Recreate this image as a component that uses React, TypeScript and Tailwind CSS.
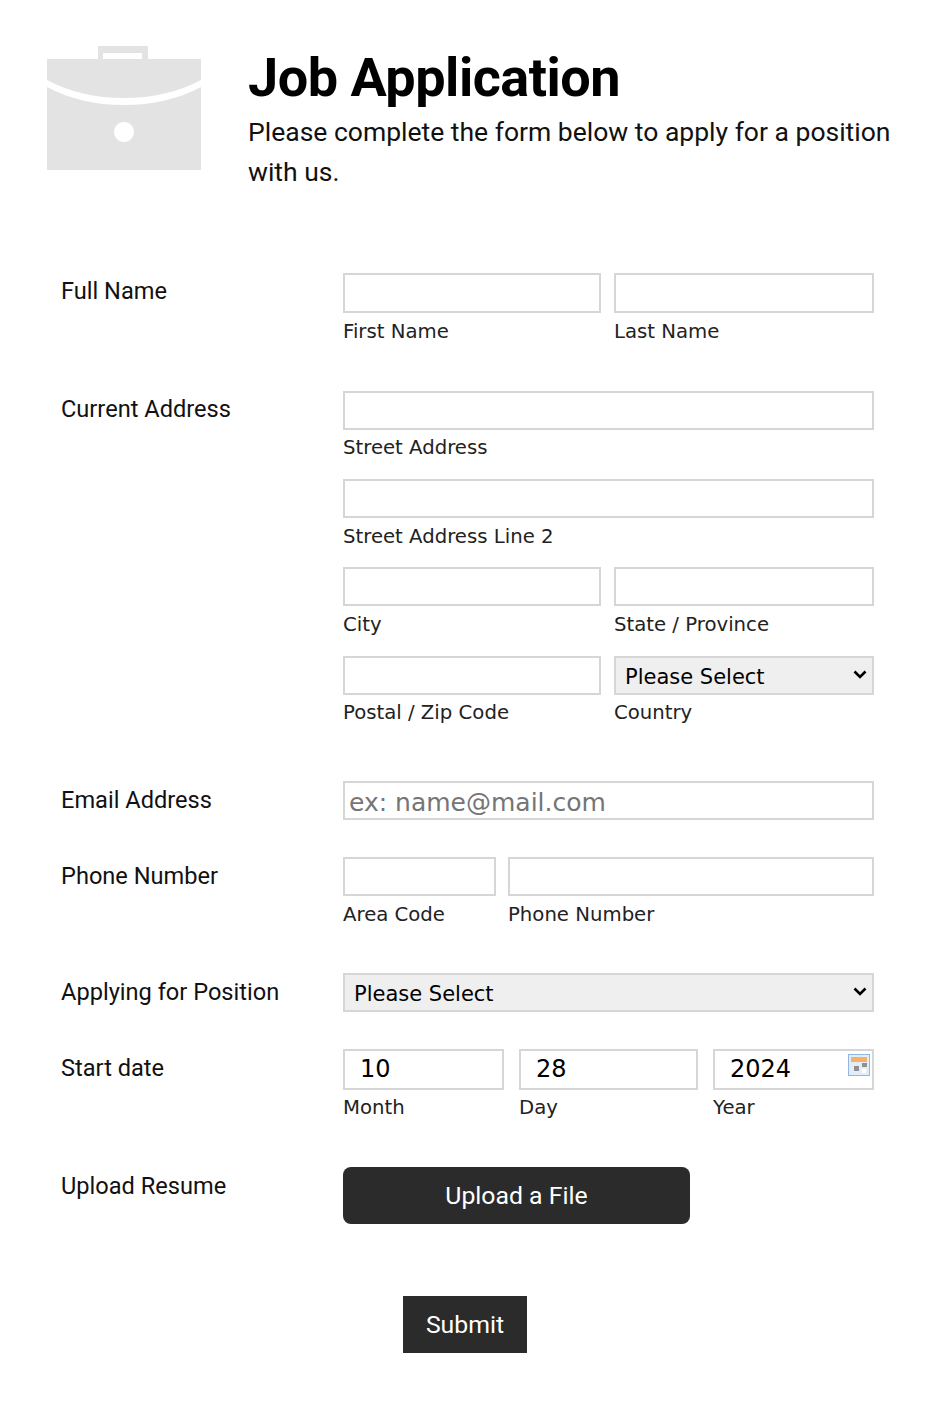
import React from "react";

const inputCls =
  "block w-full h-[39px] bg-white border-2 border-[#d6d6d6] px-1 text-[25px] font-['DejaVu_Sans',sans-serif] text-black outline-none placeholder:text-[#757575]";
const dateCls =
  "block w-full h-[41px] bg-white border-2 border-[#d6d6d6] pl-[15px] pr-1 pb-[1px] text-[24px] font-['DejaVu_Sans',sans-serif] text-black outline-none";
const selectCls =
  "block w-full h-[39px] appearance-none bg-[#efefef] border-2 border-[#d6d6d6] pl-[9px] pt-[4px] text-[21px] font-['DejaVu_Sans',sans-serif] text-black outline-none";

function SubLabel({ children }: { children: React.ReactNode }) {
  return (
    <div className="mt-[5px] h-[28px] text-[19.7px] leading-[28px] text-[#222] font-['DejaVu_Sans',sans-serif]">
      {children}
    </div>
  );
}

function Row({ label, className, children }: { label: string; className: string; children: React.ReactNode }) {
  return (
    <div className={"flex " + className}>
      <div className="w-[282px] shrink-0 pt-[2px] text-[23.6px] leading-[32px] text-[#111]">{label}</div>
      <div className="w-[531px] shrink-0">{children}</div>
    </div>
  );
}

function SelectBox() {
  return (
    <div className="relative">
      <select className={selectCls}>
        <option>Please Select</option>
      </select>
      <svg width="14" height="10" viewBox="0 0 14 10" className="absolute right-[7px] top-[14px]">
        <path d="M1.5 1.5L7 7L12.5 1.5" fill="none" stroke="#000" strokeWidth="2.6" />
      </svg>
    </div>
  );
}

function Briefcase() {
  return (
    <svg width="156" height="124" viewBox="0 0 156 124" className="shrink-0 blur-[0.5px]">
      <path
        fill="#e3e3e3"
        fillRule="evenodd"
        d="M52 13V0h50v13h53v21C132 46 107 52 78 52S24 46 1 34V13h51zm5 0h39V7H57v6zM1 41c23 12 48 18 77 18s54-6 77-18v83H1V41zm77 35a10 10 0 1 0 0.01 0z"
      />
    </svg>
  );
}

function CalendarIcon() {
  return (
    <svg width="22" height="22" viewBox="0 0 22 22" className="absolute right-[4px] top-[5px]">
      <rect x="0.5" y="0.5" width="21" height="21" fill="#e3edf8" stroke="#8fb8e4" />
      <rect x="3" y="3" width="16" height="5" fill="#f3b266" />
      <rect x="6" y="12" width="5" height="5" fill="#8f8f8f" />
      <rect x="14" y="9" width="5" height="4" fill="#8f8f8f" />
      <rect x="14" y="15" width="4" height="4" fill="#ffffff" />
    </svg>
  );
}

export default function App() {
  return (
    <div className="w-[930px] h-[1424px] bg-white font-['Roboto',sans-serif] text-black overflow-hidden">
      <header className="flex pl-[46px] pt-[46px] h-[273px]">
        <Briefcase />
        <div className="ml-[46px]">
          <h1 className="text-[54px] leading-[64px] font-bold tracking-[-0.5px]">Job Application</h1>
          <p className="mt-[2px] w-[660px] text-[26.5px] leading-[40px] text-[#111]">
            Please complete the form below to apply for a position with us.
          </p>
        </div>
      </header>

      <form className="pl-[61px]">
        <Row label="Full Name" className="h-[118px]">
          <div className="grid grid-cols-[258px_260px] gap-x-[13px]">
            <div>
              <input className={inputCls + " !h-[40px]"} />
              <SubLabel>First Name</SubLabel>
            </div>
            <div>
              <input className={inputCls + " !h-[40px]"} />
              <SubLabel>Last Name</SubLabel>
            </div>
          </div>
        </Row>

        <Row label="Current Address" className="h-[390px]">
          <div className="flex flex-col">
            <div className="h-[88px]">
              <input className={inputCls} />
              <div className="-mt-px">
                <SubLabel>Street Address</SubLabel>
              </div>
            </div>
            <div className="h-[88px]">
              <input className={inputCls} />
              <SubLabel>Street Address Line 2</SubLabel>
            </div>
            <div className="h-[89px] grid grid-cols-[258px_260px] gap-x-[13px]">
              <div>
                <input className={inputCls} />
                <SubLabel>City</SubLabel>
              </div>
              <div>
                <input className={inputCls} />
                <SubLabel>State / Province</SubLabel>
              </div>
            </div>
            <div className="grid grid-cols-[258px_260px] gap-x-[13px]">
              <div>
                <input className={inputCls} />
                <div className="-mt-px">
                  <SubLabel>Postal / Zip Code</SubLabel>
                </div>
              </div>
              <div>
                <SelectBox />
                <div className="-mt-px">
                  <SubLabel>Country</SubLabel>
                </div>
              </div>
            </div>
          </div>
        </Row>

        <Row label="Email Address" className="h-[76px] [&>div:first-child]:pt-[3px]">
          <input className={inputCls + " pt-[3px]"} placeholder="ex: name@mail.com" />
        </Row>

        <Row label="Phone Number" className="h-[116px] [&>div:first-child]:pt-[3px]">
          <div className="grid grid-cols-[153px_366px] gap-x-[12px] w-[531px]">
            <div>
              <input className={inputCls} />
              <SubLabel>Area Code</SubLabel>
            </div>
            <div>
              <input className={inputCls} />
              <SubLabel>Phone Number</SubLabel>
            </div>
          </div>
        </Row>

        <Row label="Applying for Position" className="h-[76px] [&>div:first-child]:pt-[3px]">
          <SelectBox />
        </Row>

        <Row label="Start date" className="h-[118px] [&>div:first-child]:pt-[3px]">
          <div className="grid grid-cols-[161px_179px_161px] gap-x-[15px]">
            <div>
              <input className={dateCls} defaultValue="10" />
              <div className="-mt-px">
                <SubLabel>Month</SubLabel>
              </div>
            </div>
            <div>
              <input className={dateCls} defaultValue="28" />
              <div className="-mt-px">
                <SubLabel>Day</SubLabel>
              </div>
            </div>
            <div>
              <div className="relative">
                <input className={dateCls} defaultValue="2024" />
                <CalendarIcon />
              </div>
              <div className="-mt-px">
                <SubLabel>Year</SubLabel>
              </div>
            </div>
          </div>
        </Row>

        <Row label="Upload Resume" className="h-[129px] [&>div:first-child]:pt-[3px]">
          <button
            type="button"
            className="w-[347px] h-[57px] rounded-[8px] bg-[#2b2b2b] pt-[1px] text-white text-[24.8px]"
          >
            Upload a File
          </button>
        </Row>

        <div className="pl-[342px]">
          <button type="button" className="w-[124px] h-[57px] bg-[#2b2b2b] text-white text-[24.8px]">
            Submit
          </button>
        </div>
      </form>
    </div>
  );
}
